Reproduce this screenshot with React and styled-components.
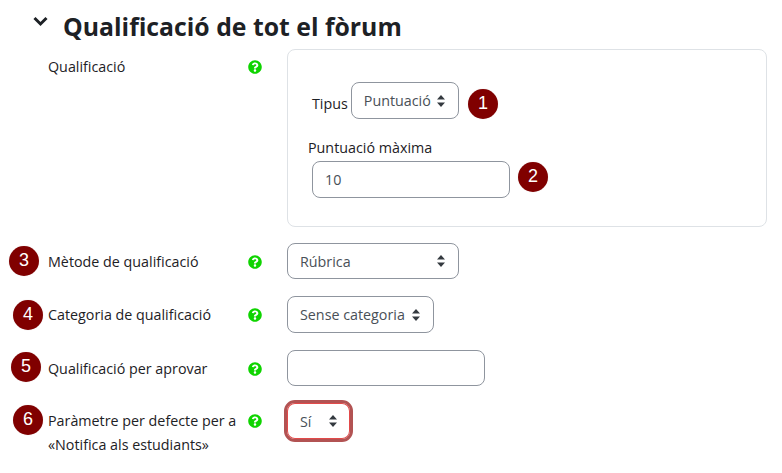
import styled, { createGlobalStyle } from "styled-components";
import { FaQuestionCircle } from "react-icons/fa";

const GlobalStyle = createGlobalStyle`
  html, body {
    margin: 0;
    padding: 0;
    background: #fff;
    font-family: "Open Sans", "Liberation Sans", sans-serif;
    color: #1d2125;
  }
`;

const Page = styled.div`
  width: 782px;
  height: 473px;
  overflow: hidden;
  padding-top: 9px;
  box-sizing: border-box;
`;

const Header = styled.div`
  display: flex;
  align-items: center;
  gap: 15px;
  height: 34px;
  padding-left: 33px;
`;

const Chevron = styled.svg`
  width: 15px;
  height: 15px;
  margin-top: -9px;
  color: #1d2125;
`;

const Heading = styled.h2`
  margin: 0;
  font-size: 24.8px;
  font-weight: 700;
  line-height: 34px;
`;

const Row = styled.div`
  position: relative;
  display: grid;
  grid-template-columns: 239px 1fr;
  padding-left: 48px;
  margin-top: ${(p) => p.$top}px;
`;

const LabelCell = styled.div`
  display: grid;
  grid-template-columns: 197px 1fr;
  padding-top: ${(p) => p.$pad}px;
`;

const Label = styled.div`
  font-size: 14.3px;
  line-height: 24px;
  color: #1d2125;
`;

const Help = styled(FaQuestionCircle)`
  width: 14px;
  height: 14px;
  margin: 5px 0 0 3px;
  color: #0fd400;
`;

const Panel = styled.div`
  box-sizing: border-box;
  width: 480px;
  height: 178px;
  border: 1px solid #dee2e6;
  border-radius: 8px;
  padding: 32px 0 0 20px;
`;

const InlineGroup = styled.div`
  display: flex;
  align-items: center;
  gap: 3px;
  padding-left: 4px;
`;

const PlainLabel = styled.span`
  font-size: 14.3px;
  line-height: 24px;
  padding-top: 6px;
`;

const StackLabel = styled.div`
  font-size: 14.3px;
  line-height: 20px;
  margin: 19px 0 3px;
`;

const Select = styled.div`
  box-sizing: border-box;
  display: flex;
  align-items: center;
  justify-content: space-between;
  width: ${(p) => p.$w}px;
  height: ${(p) => p.$h || 37}px;
  padding: 0 12px;
  border: 1px solid #8f959e;
  border-radius: 8px;
  background: #fff;
  font-size: 14.3px;
  color: #495057;
`;

const Carets = styled.svg`
  width: 10px;
  height: 14px;
  flex: none;
  color: #343a40;
`;

const TextInput = styled.div`
  box-sizing: border-box;
  display: flex;
  align-items: center;
  width: 198px;
  height: ${(p) => p.$h || 37}px;
  padding: 0 12px;
  margin-left: ${(p) => p.$left || 0}px;
  border: 1px solid #8f959e;
  border-radius: 8px;
  background: #fff;
  font-size: 14.3px;
  color: #495057;
`;

const Highlight = styled.div`
  box-sizing: border-box;
  width: 69px;
  height: 42px;
  margin-left: -3px;
  border: 3px solid #b25353;
  border-radius: 11px;
  box-shadow: inset 0 0 0 1px #e24a4a;
  display: flex;
  align-items: center;
  justify-content: space-between;
  padding: 0 12px 0 13px;
  font-size: 14.3px;
  color: #495057;
`;

const Badge = styled.span`
  position: absolute;
  left: ${(p) => p.$x - 15}px;
  top: ${(p) => p.$y - 15}px;
  width: 30px;
  height: 30px;
  border-radius: 50%;
  background: #800000;
  box-shadow: 0 0 1px #d8c8c8;
  color: #fff;
  font-family: "Liberation Sans", sans-serif;
  font-size: 18px;
  line-height: 29px;
  text-align: center;
`;

const CaretIcon = () => (
  <Carets viewBox="0 0 10 14">
    <path d="M5 1 L9 5.5 H1 Z M5 13 L1 8.5 H9 Z" fill="currentColor" />
  </Carets>
);

const HelpLabel = ({ pad, children }) => (
  <LabelCell $pad={pad}>
    <Label>{children}</Label>
    <Help />
  </LabelCell>
);

export default function App() {
  return (
    <Page>
      <GlobalStyle />
      <Header>
        <Chevron viewBox="0 0 15 15">
          <path d="M1.5 4 L7.5 10 L13.5 4" fill="none" stroke="currentColor" strokeWidth="3" />
        </Chevron>
        <Heading>Qualificació de tot el fòrum</Heading>
      </Header>

      <Row $top={6}>
        <HelpLabel pad={6}>Qualificació</HelpLabel>
        <Panel>
          <InlineGroup>
            <PlainLabel>Tipus</PlainLabel>
            <Select $w={108}>
              Puntuació
              <CaretIcon />
            </Select>
          </InlineGroup>
          <StackLabel>Puntuació màxima</StackLabel>
          <TextInput $left={4}>10</TextInput>
        </Panel>
        <Badge $x={483} $y={55}>1</Badge>
        <Badge $x={533} $y={128}>2</Badge>
      </Row>

      <Row $top={16}>
        <HelpLabel pad={7}>Mètode de qualificació</HelpLabel>
        <Select $w={172} $h={36}>
          Rúbrica
          <CaretIcon />
        </Select>
        <Badge $x={24} $y={18}>3</Badge>
      </Row>

      <Row $top={17}>
        <HelpLabel pad={7}>Categoria de qualificació</HelpLabel>
        <Select $w={147}>
          Sense categoria
          <CaretIcon />
        </Select>
        <Badge $x={28} $y={19}>4</Badge>
      </Row>

      <Row $top={17}>
        <HelpLabel pad={7}>Qualificació per aprovar</HelpLabel>
        <TextInput $h={36} />
        <Badge $x={26} $y={17}>5</Badge>
      </Row>

      <Row $top={14}>
        <HelpLabel pad={9}>
          Paràmetre per defecte per a
          <br />
          «Notifica als estudiants»
        </HelpLabel>
        <Highlight>
          Sí
          <CaretIcon />
        </Highlight>
        <Badge $x={28} $y={20}>6</Badge>
      </Row>
    </Page>
  );
}
